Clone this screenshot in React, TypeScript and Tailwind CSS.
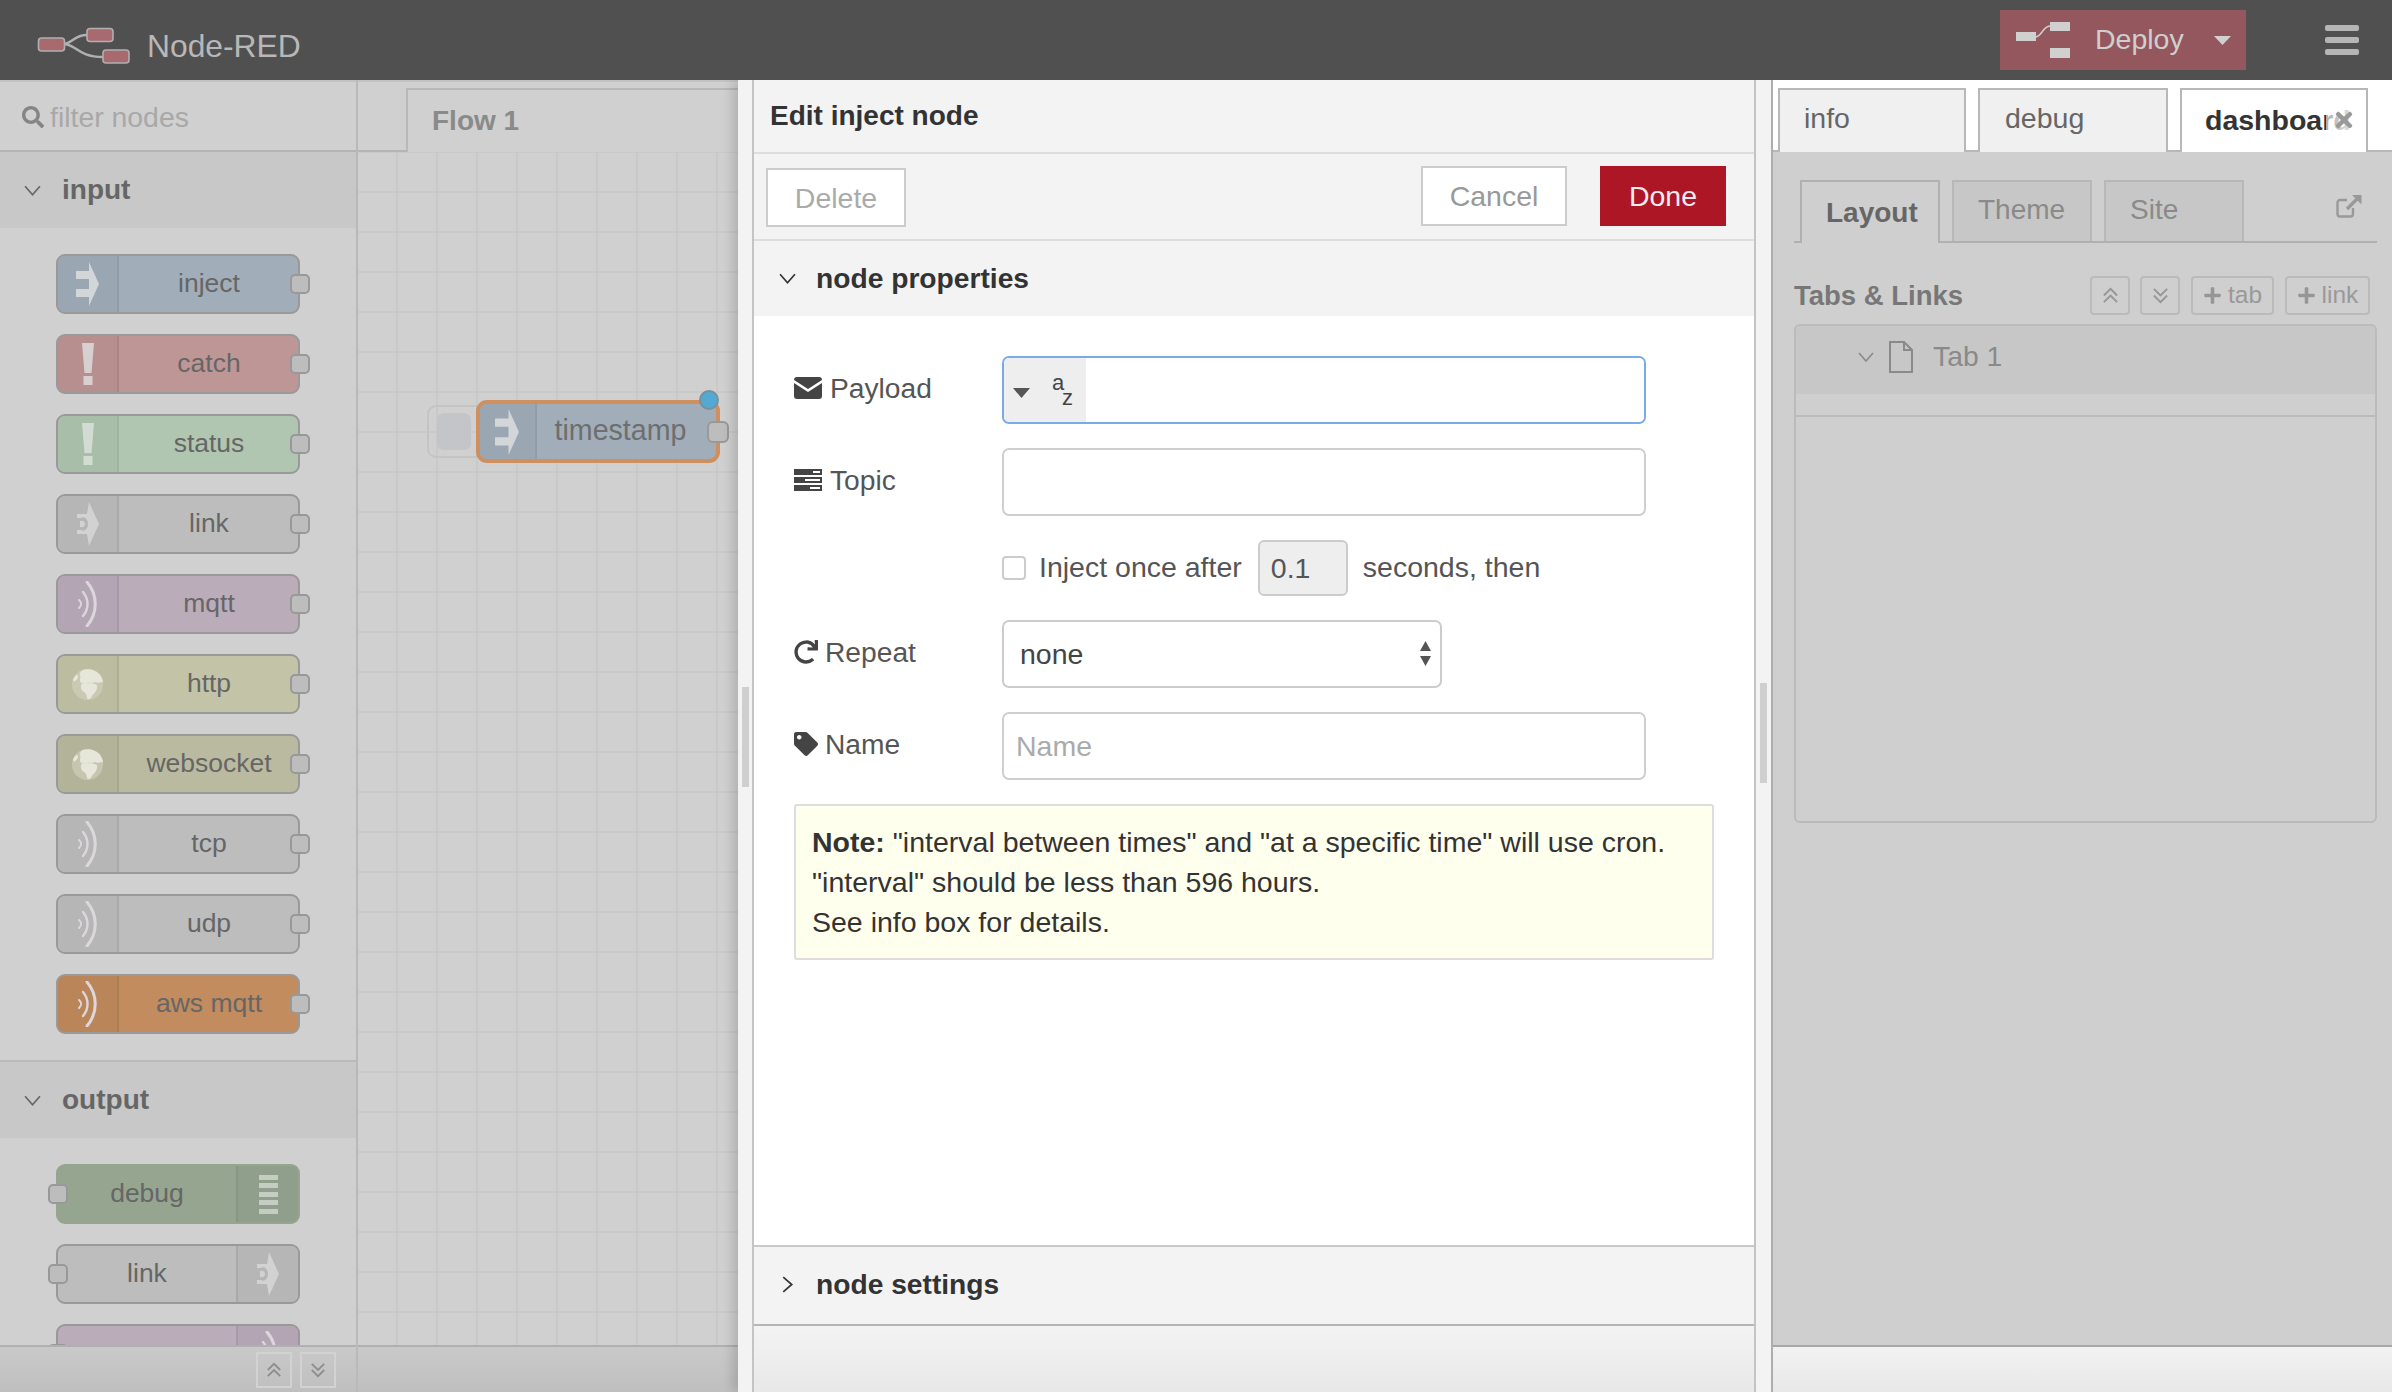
import React from "react";
import { FaSearch, FaRedo, FaTag, FaPlus, FaTimes } from "react-icons/fa";

const Chevron = ({ dir = "down", className = "" }: { dir?: "down" | "right"; className?: string }) => (
  <svg viewBox="0 0 16 16" className={className} fill="none" stroke="currentColor" strokeWidth="1.6">
    {dir === "down" ? <polyline points="1,4 8,12 15,4" /> : <polyline points="4,1 12,8 4,15" />}
  </svg>
);

const DoubleAngle = ({ up, className = "" }: { up?: boolean; className?: string }) => (
  <svg viewBox="0 0 18 18" className={className} fill="none" stroke="currentColor" strokeWidth="2">
    {up ? (
      <>
        <polyline points="2,9 9,2 16,9" />
        <polyline points="2,16 9,9 16,16" />
      </>
    ) : (
      <>
        <polyline points="2,2 9,9 16,2" />
        <polyline points="2,9 9,16 16,9" />
      </>
    )}
  </svg>
);

const IconFill = "#d3d6d8";

const InjectIcon = ({ className = "" }: { className?: string }) => (
  <svg viewBox="0 0 24 44" className={className} fill={IconFill}>
    <path d="M13 0 L23 22 L13 44 V35 H0 V27 H13 V17 H0 V9 H13 Z" />
  </svg>
);

const AlertIcon = ({ fill }: { fill: string }) => (
  <svg viewBox="0 0 12 42" className="w-[12px] h-[42px]" fill={fill}>
    <path d="M0 0 H12 L9.5 30 H2.5 Z" />
    <rect x="1.5" y="33" width="9" height="9" />
  </svg>
);

const LinkIcon = ({ className = "" }: { className?: string }) => (
  <svg viewBox="0 0 24 44" className={className} fill="#d2d2d2">
    <path d="M13 0 L23 22 L13 44 L11 32 L1 32 L1 28 L5 28 C8 30 12 27 12 22 C12 17 8 14 5 16 L1 16 L1 12 L11 12 Z" />
    <path d="M4 19 C7 18 9 20 9 22 C9 24 7 26 4 25 Z" />
  </svg>
);

const WaveIcon = () => (
  <svg viewBox="0 0 20 46" className="w-[20px] h-[46px]" fill="none" stroke="#dcd7db" strokeLinecap="round">
    <path d="M9 1 C20 14 20 32 9 45" strokeWidth="3" />
    <path d="M5 11 C11 18 11 28 5 35" strokeWidth="2.4" />
    <path d="M1 19 C4 22 4 24 1 27" strokeWidth="2" />
  </svg>
);

const GlobeIcon = () => (
  <svg viewBox="0 0 34 34" className="w-[33px] h-[33px]">
    <circle cx="17" cy="17" r="16" fill="#d8d8c6" opacity="0.5" />
    <path d="M12 2 C18 0 26 2 30 7 C32 10 33 13 33 15 C30 14 28 16 26 15 C24 13 22 17 19 15 C16 15 14 17 10 15 C8 12 11 9 9 7 C9 5 10 3 12 2 Z" fill="#e6e6da" />
    <path d="M11 16 C16 15 24 15 27 18 C27 24 24 26 22 28 C21 31 18 33 17 32 C16 29 16 27 14 25 C11 24 9 20 11 16 Z" fill="#e6e6da" />
    <path d="M2 12 C4 8 6 6 7 8 C8 11 5 13 3 14 Z" fill="#e6e6da" />
  </svg>
);

const DebugIcon = () => (
  <div className="flex flex-col gap-[3.5px]">
    {[0, 1, 2, 3, 4].map((i) => (
      <div key={i} className="w-[19px] h-[5px] bg-[#c5cdc2]" />
    ))}
  </div>
);

const Port = ({ side }: { side: "left" | "right" }) => (
  <div
    className={`absolute top-[18px] w-[20px] h-[20px] rounded-[5px] border-2 border-[#999999] bg-[#bdbdbd] ${
      side === "right" ? "right-[-12px]" : "left-[-10px]"
    }`}
  />
);

type N = { label: string; bg: string; ic: string; icon: React.ReactNode; divide: string };

const inputs: N[] = [
  { label: "inject", bg: "bg-[#a1adb8]", ic: "bg-[#9aa6b1]", divide: "border-[#8f9ba6]", icon: <InjectIcon className="w-[24px] h-[44px]" /> },
  { label: "catch", bg: "bg-[#bf9696]", ic: "bg-[#b78f8f]", divide: "border-[#ab8585]", icon: <AlertIcon fill="#d8d0d0" /> },
  { label: "status", bg: "bg-[#b0c6b0]", ic: "bg-[#a9bea9]", divide: "border-[#9fb39f]", icon: <AlertIcon fill="#d3dcd3" /> },
  { label: "link", bg: "bg-[#bdbdbd]", ic: "bg-[#b6b6b6]", divide: "border-[#a9a9a9]", icon: <LinkIcon className="w-[24px] h-[44px]" /> },
  { label: "mqtt", bg: "bg-[#bbacba]", ic: "bg-[#b3a5b3]", divide: "border-[#a799a7]", icon: <WaveIcon /> },
  { label: "http", bg: "bg-[#c3c3a7]", ic: "bg-[#bcbca1]", divide: "border-[#afaf96]", icon: <GlobeIcon /> },
  { label: "websocket", bg: "bg-[#babaa0]", ic: "bg-[#b3b39a]", divide: "border-[#a7a78f]", icon: <GlobeIcon /> },
  { label: "tcp", bg: "bg-[#bdbdbd]", ic: "bg-[#b6b6b6]", divide: "border-[#a9a9a9]", icon: <WaveIcon /> },
  { label: "udp", bg: "bg-[#bdbdbd]", ic: "bg-[#b6b6b6]", divide: "border-[#a9a9a9]", icon: <WaveIcon /> },
  { label: "aws mqtt", bg: "bg-[#c28c5e]", ic: "bg-[#ba8659]", divide: "border-[#ad7d53]", icon: <WaveIcon /> },
];

const InNode = ({ n }: { n: N }) => (
  <div className={`relative flex-none w-[244px] h-[60px] border-2 border-[#999999] rounded-[9px] flex ${n.bg}`}>
    <div className={`w-[61px] flex-none flex items-center justify-center rounded-l-[7px] border-r-2 ${n.ic} ${n.divide}`}>{n.icon}</div>
    <div className="flex-1 flex items-center justify-center text-[26.5px] text-[#666666] pl-[1px]">{n.label}</div>
    <Port side="right" />
  </div>
);

const OutNode = ({ label, bg, ic, divide, icon, border }: { label: string; bg: string; ic: string; divide: string; icon: React.ReactNode; border: string }) => (
  <div className={`relative flex-none w-[244px] h-[60px] border-2 rounded-[9px] flex ${bg} ${border}`}>
    <div className="flex-1 flex items-center justify-center text-[26.5px] text-[#666666]">{label}</div>
    <div className={`w-[62px] flex-none flex items-center justify-center rounded-r-[7px] border-l-2 ${ic} ${divide}`}>{icon}</div>
    <Port side="left" />
  </div>
);

const Category = ({ label }: { label: string }) => (
  <div className="flex-none h-[76px] bg-[#c8c8c8] flex items-center text-[#666666]">
    <Chevron className="w-[17px] h-[17px] ml-[24px]" />
    <span className="ml-[21px] text-[28px] font-bold">{label}</span>
  </div>
);

const Palette = () => (
  <div className="flex-none w-[358px] h-full flex flex-col bg-[#d0d0d0] border-r-2 border-[#b9b9b9]">
    <div className="flex-none h-[72px] border-t-2 border-b-2 border-t-[#c2c2c2] border-b-[#b4b4b4] flex items-center pl-[22px] pt-[2px]">
      <FaSearch className="w-[22px] h-[22px] text-[#858585]" />
      <span className="ml-[6px] text-[28.4px] text-[#a8a8a8]">filter nodes</span>
    </div>
    <div className="flex-1 min-h-0 overflow-hidden flex flex-col">
      <Category label="input" />
      <div className="flex-none flex flex-col gap-[20px] pl-[56px] pt-[26px] pb-[26px] border-b-2 border-[#bababa]">
        {inputs.map((n, i) => (
          <InNode key={i} n={n} />
        ))}
      </div>
      <Category label="output" />
      <div className="flex-none flex flex-col gap-[20px] pl-[56px] pt-[26px]">
        <OutNode label="debug" bg="bg-[#95a590]" ic="bg-[#8f9f8b]" divide="border-[#879783]" border="border-[#95a590]" icon={<DebugIcon />} />
        <OutNode label="link" bg="bg-[#bdbdbd]" ic="bg-[#b6b6b6]" divide="border-[#a9a9a9]" border="border-[#999999]" icon={<LinkIcon className="w-[24px] h-[44px]" />} />
        <OutNode label="" bg="bg-[#bbacba]" ic="bg-[#b3a5b3]" divide="border-[#a799a7]" border="border-[#999999]" icon={<WaveIcon />} />
      </div>
    </div>
    <div className="flex-none h-[47px] border-t-2 border-[#b0b0b0] bg-gradient-to-b from-[#c9c9c9] to-[#bfbfbf] flex items-center justify-end gap-[8px] pr-[20px]">
      <div className="w-[36px] h-[36px] border-2 border-[#d2d2d2] flex items-center justify-center text-[#8d8d8d]">
        <DoubleAngle up className="w-[16px] h-[16px]" />
      </div>
      <div className="w-[36px] h-[36px] border-2 border-[#d2d2d2] flex items-center justify-center text-[#8d8d8d]">
        <DoubleAngle className="w-[16px] h-[16px]" />
      </div>
    </div>
  </div>
);

const Workspace = () => (
  <div className="flex-none w-[380px] h-full flex flex-col bg-[#d0d0d0]">
    <div className="flex-none h-[72px] border-t-2 border-[#c2c2c2] flex items-end">
      <div className="w-[48px] h-full border-b-2 border-[#b4b4b4]" />
      <div className="flex-1 h-[64px] border-l-2 border-t-2 border-[#b8b8b8] flex items-center pl-[24px] text-[28px] font-bold text-[#8a8a8a]">Flow 1</div>
    </div>
    <div className="relative flex-1 min-h-0 overflow-hidden bg-[linear-gradient(to_right,transparent_38px,#c9c9c9_38px,#c9c9c9_40px),linear-gradient(to_bottom,transparent_38px,#c9c9c9_38px,#c9c9c9_40px)] bg-[size:40px_40px] bg-[position:0_1px]">
      <div className="absolute left-[69px] top-[253px] w-[60px] h-[53px] border-2 border-[#c4c4c4] rounded-[9px] flex items-center pl-[8px]">
        <div className="w-[34px] h-[37px] rounded-[7px] bg-[#c3c5c8]" />
      </div>
      <div className="absolute left-[118px] top-[248px] w-[244px] h-[63px] border-[4px] border-[#cf8f5f] rounded-[11px] bg-[#a1adb8] flex">
        <div className="w-[57px] flex-none flex items-center justify-center bg-[#9aa6b1] rounded-l-[7px] border-r-2 border-[#919da8]">
          <InjectIcon className="w-[25px] h-[46px]" />
        </div>
        <div className="flex-1 flex items-center justify-center text-[28.6px] text-[#6e6e6e] pb-[3px] pr-[12px]">timestamp</div>
        <div className="absolute right-[-13px] top-[17px] w-[22px] h-[22px] rounded-[6px] border-2 border-[#999999] bg-[#bdbdbd]" />
        <div className="absolute right-[-3px] top-[-14px] w-[20px] h-[20px] rounded-full border-2 border-[#7b8f99] bg-[#52a9d4]" />
      </div>
    </div>
    <div className="flex-none h-[47px] border-t-2 border-[#b0b0b0] bg-gradient-to-b from-[#c9c9c9] to-[#bfbfbf]" />
  </div>
);

const inputCls = "block w-[644px] h-[68px] bg-white border-2 border-[#cfcfcf] rounded-[7px] px-[12px] text-[28.5px] outline-none placeholder:text-[#aaaaaa]";

const Row = ({ icon, label, children }: { icon: React.ReactNode; label: string; children: React.ReactNode }) => (
  <div className="flex items-center">
    <div className="w-[208px] flex-none flex items-center text-[28.2px] text-[#555555] mb-[4px]">
      {icon}
      {label}
    </div>
    {children}
  </div>
);

const Tray = () => (
  <div className="relative z-10 flex-none w-[1033px] h-full flex bg-[#f3f3f3] shadow-[-6px_0_10px_rgba(0,0,0,0.14)]">
    <div className="w-[14px] flex-none flex items-center justify-start pl-[4px] pt-[2px]">
      <div className="w-[7px] h-[100px] bg-[#cfcfcf]" />
    </div>
    <div className="flex-1 min-w-0 flex flex-col border-x-2 border-x-[#c4c4c4]">
      <div className="flex-none h-[72px] flex items-center pl-[16px] text-[28px] font-bold text-[#333333]">Edit inject node</div>
      <div className="flex-none h-[87px] border-t-2 border-[#dddddd] flex items-start justify-between pl-[12px] pr-[28px]">
        <div className="mt-[14px] w-[140px] h-[59px] bg-white border-2 border-[#cccccc] flex items-center justify-center pt-[2px] text-[28.5px] text-[#aaaaaa]">Delete</div>
        <div className="flex gap-[33px] mt-[12px]">
          <div className="w-[146px] h-[60px] bg-white border-2 border-[#cccccc] flex items-center justify-center text-[28.5px] text-[#999999]">Cancel</div>
          <div className="w-[126px] h-[60px] bg-[#ad1625] flex items-center justify-center text-[28.5px] text-[#eeeeee]">Done</div>
        </div>
      </div>
      <div className="flex-none h-[77px] border-t-2 border-[#dddddd] flex items-center text-[#333333]">
        <Chevron className="w-[17px] h-[17px] ml-[25px]" />
        <span className="ml-[20px] text-[28.2px] font-bold">node properties</span>
      </div>
      <div className="flex-1 min-h-0 bg-white pt-[40px] pl-[40px] flex flex-col gap-[24px]">
        <Row
          icon={
            <svg viewBox="0 0 28 22" className="w-[28px] h-[22px] mr-[8px]" fill="#444444">
              <path d="M3 0 H25 A3 3 0 0 1 28 3 L14 12 L0 3 A3 3 0 0 1 3 0 Z" />
              <path d="M0 6 L14 15 L28 6 V19 A3 3 0 0 1 25 22 H3 A3 3 0 0 1 0 19 Z" />
            </svg>
          }
          label="Payload"
        >
          <div className="w-[644px] h-[68px] border-2 border-[#78ace8] rounded-[7px] flex overflow-hidden">
            <div className="w-[82px] flex-none bg-[#eeeeee] flex items-center pl-[9px]">
              <svg viewBox="0 0 17 10" className="w-[17px] h-[10px] mt-[6px]" fill="#555555">
                <path d="M0 0 H17 L8.5 10 Z" />
              </svg>
              <div className="ml-[22px] w-[21px] flex flex-col text-[22px] leading-[15px] text-[#444444]">
                <span className="self-start">a</span>
                <span className="self-end">z</span>
              </div>
            </div>
            <input readOnly className="flex-1 min-w-0 bg-white outline-none" />
          </div>
        </Row>
        <Row
          icon={
            <svg viewBox="0 0 28 22" className="w-[28px] h-[22px] mr-[8px]" fill="#444444">
              <path fillRule="evenodd" d="M0 0H28V6H0Z M19 2V4H26V2Z M0 8H28V14H0Z M11 10V12H26V10Z M0 16H28V22H0Z M16 18V20H26V18Z" />
            </svg>
          }
          label="Topic"
        >
          <input readOnly className={inputCls} />
        </Row>
        <div className="flex items-center h-[56px] pl-[208px]">
          <div className="w-[24px] h-[24px] bg-white border-2 border-[#cccccc] rounded-[4px] flex-none" />
          <span className="ml-[13px] text-[28.5px] text-[#555555] mb-[2px]">Inject once after</span>
          <div className="ml-[16px] w-[90px] h-[56px] bg-[#eeeeee] border-2 border-[#cccccc] rounded-[6px] flex items-center pl-[11px] text-[28.5px] text-[#555555]">0.1</div>
          <span className="ml-[15px] text-[28.5px] text-[#555555] mb-[2px]">seconds, then</span>
        </div>
        <Row icon={<FaRedo className="w-[24px] h-[24px] mr-[7px] text-[#444444]" />} label="Repeat">
          <div className="w-[440px] h-[68px] bg-white border-2 border-[#cccccc] rounded-[7px] flex items-center justify-between pl-[16px] pr-[9px] text-[28.5px] text-[#444444]">
            <span>none</span>
            <svg viewBox="0 0 11 26" className="w-[11px] h-[26px]" fill="#555555">
              <path d="M5.5 0 L11 10 H0 Z M0 15 H11 L5.5 25 Z" />
            </svg>
          </div>
        </Row>
        <Row icon={<FaTag className="w-[24px] h-[24px] mr-[7px] text-[#444444]" />} label="Name">
          <input readOnly placeholder="Name" className={inputCls} />
        </Row>
        <div className="w-[920px] h-[156px] bg-[#ffffee] border-2 border-[#dddddd] rounded-[3px] pl-[16px] pt-[16px] text-[28.5px] leading-[40px] text-[#333333]">
          <b>Note:</b> "interval between times" and "at a specific time" will use cron.
          <br />
          "interval" should be less than 596 hours.
          <br />
          See info box for details.
        </div>
      </div>
      <div className="flex-none h-[81px] border-t-2 border-[#c8c8c8] border-b-2 border-b-[#b5b5b5] flex items-center pb-[2px] text-[#333333]">
        <Chevron dir="right" className="w-[17px] h-[17px] ml-[25px]" />
        <span className="ml-[20px] text-[28.2px] font-bold">node settings</span>
      </div>
      <div className="flex-none h-[66px] bg-gradient-to-b from-[#f3f3f3] to-[#e8e8e8]" />
    </div>
    <div className="w-[15px] flex-none flex items-center pl-[4px] pb-[6px]">
      <div className="w-[7px] h-[100px] bg-[#cfcfcf]" />
    </div>
  </div>
);

const Sidebar = () => (
  <div className="flex-1 min-w-0 h-full flex flex-col border-l-2 border-[#b0b0b0]">
    <div className="flex-none h-[72px] bg-white border-b-2 border-[#b8b8b8] flex items-end pl-[5px] gap-[12px]">
      <div className="w-[188px] h-[64px] -mb-[2px] bg-[#f0f0f0] border-2 border-b-0 border-[#b8b8b8] flex items-center pl-[24px] pb-[5px] text-[28.5px] text-[#666666]">info</div>
      <div className="w-[190px] h-[64px] -mb-[2px] bg-[#f0f0f0] border-2 border-b-0 border-[#b8b8b8] flex items-center pl-[25px] pb-[5px] text-[28.5px] text-[#666666]">debug</div>
      <div className="relative w-[188px] h-[64px] -mb-[2px] bg-white border-2 border-b-0 border-[#b8b8b8] flex items-center pl-[23px] pb-[1px] text-[28.5px] font-bold text-[#333333] overflow-hidden whitespace-nowrap">
        dashboard
        <div className="absolute right-0 top-0 h-full w-[40px] bg-gradient-to-r from-white/60 to-white" />
        <FaTimes className="absolute right-[11px] top-[18px] w-[22px] h-[24px] text-[#999999]" />
      </div>
    </div>
    <div className="flex-1 min-h-0 bg-[#cfcfcf] flex flex-col pl-[21px] pr-[15px] pt-[28px]">
      <div className="flex-none h-[63px] border-b-2 border-[#b0b0b0] flex items-end pl-[6px] gap-[12px]">
        <div className="w-[140px] h-[63px] -mb-[2px] bg-[#cfcfcf] border-2 border-b-0 border-[#b0b0b0] flex items-center pl-[24px] text-[28px] font-bold text-[#666666]">Layout</div>
        <div className="w-[140px] h-[61px] bg-[#c7c7c7] border-2 border-b-0 border-[#b8b8b8] flex items-center pl-[24px] pb-[3px] text-[28px] text-[#8a8a8a]">Theme</div>
        <div className="w-[140px] h-[61px] bg-[#c7c7c7] border-2 border-b-0 border-[#b8b8b8] flex items-center pl-[24px] pb-[3px] text-[28px] text-[#8a8a8a]">Site</div>
        <svg viewBox="0 0 26 24" className="ml-auto mr-[15px] mb-[23px] w-[26px] h-[24px]" fill="none" stroke="#999999" strokeWidth="2.4">
          <path d="M17 14 V20 A2.5 2.5 0 0 1 14.5 22.5 H4 A2.5 2.5 0 0 1 1.5 20 V8.5 A2.5 2.5 0 0 1 4 6 H11" />
          <path d="M11 15 L24 2" strokeWidth="3.4" />
          <path d="M16 1 H25.5 V10.5 Z" fill="#999999" stroke="none" />
        </svg>
      </div>
      <div className="flex-none mt-[33px] h-[39px] flex items-center">
        <span className="text-[27.5px] font-bold text-[#777777] mr-auto">Tabs &amp; Links</span>
        <div className="w-[40px] h-[39px] border-2 border-[#bbbbbb] rounded-[4px] flex items-center justify-center text-[#969696]">
          <DoubleAngle up className="w-[17px] h-[17px]" />
        </div>
        <div className="ml-[10px] w-[40px] h-[39px] border-2 border-[#bbbbbb] rounded-[4px] flex items-center justify-center text-[#969696]">
          <DoubleAngle className="w-[17px] h-[17px]" />
        </div>
        <div className="ml-[11px] w-[83px] h-[39px] border-2 border-[#bbbbbb] rounded-[4px] flex items-center justify-center text-[24.5px] text-[#999999]">
          <FaPlus className="w-[19px] h-[19px] mr-[6px] text-[#969696]" />
          tab
        </div>
        <div className="ml-[11px] mr-[7px] w-[85px] h-[39px] border-2 border-[#bbbbbb] rounded-[4px] flex items-center justify-center text-[24.5px] text-[#999999]">
          <FaPlus className="w-[19px] h-[19px] mr-[6px] text-[#969696]" />
          link
        </div>
      </div>
      <div className="flex-none mt-[9px] h-[499px] border-2 border-[#bbbbbb] rounded-[6px] overflow-hidden">
        <div className="h-[68px] bg-[#c7c7c7] flex items-center text-[#8a8a8a]">
          <Chevron className="w-[16px] h-[16px] ml-[62px] mb-[6px]" />
          <svg viewBox="0 0 24 32" className="ml-[15px] w-[24px] h-[32px] mb-[6px]" fill="none" stroke="#8a8a8a" strokeWidth="2">
            <path d="M1 1 H15 L23 9 V31 H1 Z M15 1 V9 H23" />
          </svg>
          <span className="ml-[20px] mb-[8px] text-[28.3px]">Tab 1</span>
        </div>
        <div className="h-[21px]" />
        <div className="border-t-2 border-[#bbbbbb]" />
      </div>
    </div>
    <div className="flex-none h-[47px] border-t-2 border-[#a8a8a8] bg-gradient-to-b from-[#f2f2f2] to-[#e8e8e8]" />
  </div>
);

const Header = () => (
  <div className="relative z-20 flex-none h-[80px] bg-[#505050] flex items-center">
    <svg viewBox="0 0 94 37" className="ml-[37px] mt-[11px] w-[94px] h-[37px]" fill="none">
      <path d="M26 17 C36 17 36 8 50 8" stroke="#b0b0b0" strokeWidth="2.4" />
      <path d="M26 17 C40 17 40 30 66 30" stroke="#b0b0b0" strokeWidth="2.4" />
      <rect x="1.5" y="11" width="26" height="13" rx="3" fill="#a86a6e" stroke="#b0b0b0" strokeWidth="1.6" />
      <rect x="50" y="1.5" width="26" height="13" rx="3" fill="#a86a6e" stroke="#b0b0b0" strokeWidth="1.6" />
      <rect x="66" y="23" width="26" height="13" rx="3" fill="#a86a6e" stroke="#b0b0b0" strokeWidth="1.6" />
    </svg>
    <span className="ml-[16px] mt-[14px] text-[31.8px] text-[#b8b8b8]">Node-RED</span>
    <div className="ml-auto w-[246px] h-[60px] bg-[#94575d] flex items-center">
      <svg viewBox="0 0 54 36" className="ml-[16px] w-[54px] h-[36px]" fill="#d0d0d0">
        <rect x="0" y="10" width="20" height="9" />
        <rect x="34" y="0" width="20" height="9" />
        <rect x="34" y="26" width="20" height="10" />
        <path d="M20 15 C27 13 26 5 34 4" fill="none" stroke="#d0d0d0" strokeWidth="1.6" />
      </svg>
      <span className="ml-[25px] text-[28.5px] text-[#cfcfcf] pb-[2px]">Deploy</span>
      <svg viewBox="0 0 17 9" className="ml-[30px] w-[17px] h-[9px]" fill="#d0d0d0">
        <path d="M0 0 H17 L8.5 9 Z" />
      </svg>
    </div>
    <div className="ml-[79px] mr-[33px] w-[34px] flex flex-col gap-[6px]">
      <div className="h-[6px] rounded-[2px] bg-[#b5b5b5]" />
      <div className="h-[6px] rounded-[2px] bg-[#b5b5b5]" />
      <div className="h-[6px] rounded-[2px] bg-[#b5b5b5]" />
    </div>
  </div>
);

export default function App() {
  return (
    <div className="w-[2392px] h-[1392px] overflow-hidden flex flex-col font-['Liberation_Sans',Arial,sans-serif]">
      <Header />
      <div className="flex-1 min-h-0 flex">
        <Palette />
        <Workspace />
        <Tray />
        <Sidebar />
      </div>
    </div>
  );
}
